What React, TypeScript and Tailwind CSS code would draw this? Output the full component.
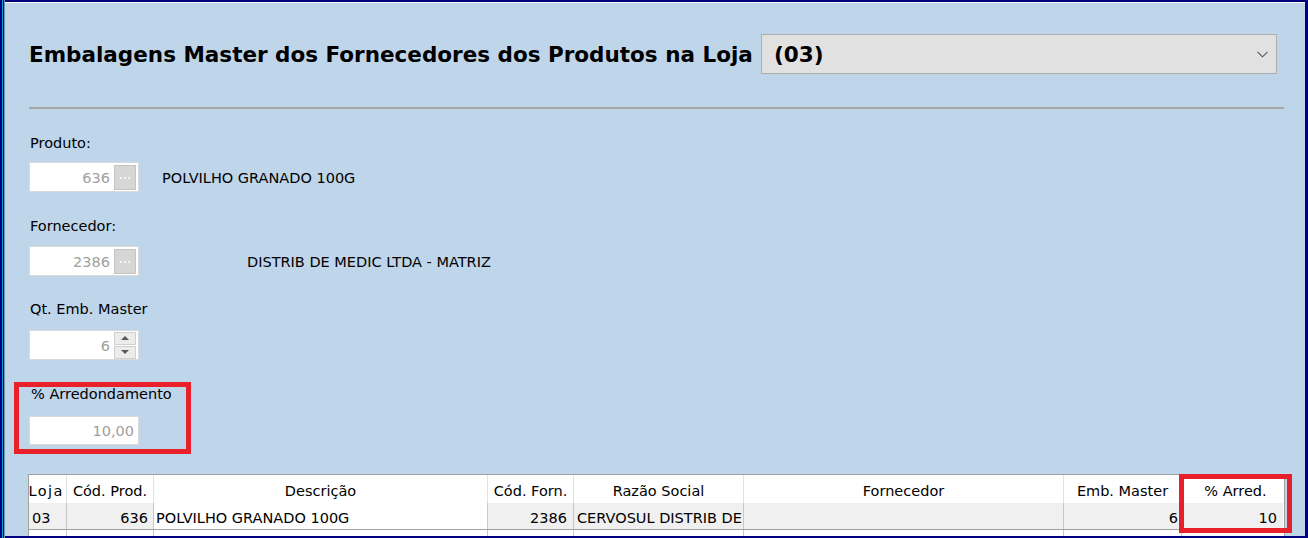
import React from "react";

function EllipsisButton() {
  return (
    <div className="w-[22px] h-[25px] bg-[#d6d6d6] border border-[#c4c4c4] flex items-center justify-center">
      <div className="flex gap-[2px] mt-[2px]">
        <div className="w-[2px] h-[2px] bg-[#f4f4f4]" />
        <div className="w-[2px] h-[2px] bg-[#f4f4f4]" />
        <div className="w-[2px] h-[2px] bg-[#f4f4f4]" />
      </div>
    </div>
  );
}

function LookupInput({ value }: { value: string }) {
  return (
    <div className="w-[110px] h-[30px] bg-white border border-[#dadada] flex items-center justify-end pr-[2px]">
      <span className="text-[#a0a0a0] mr-[4px] pt-[1px]">{value}</span>
      <EllipsisButton />
    </div>
  );
}

function SpinInput({ value }: { value: string }) {
  return (
    <div className="w-[110px] h-[30px] bg-white border border-[#dadada] flex items-center justify-end pr-[2px]">
      <span className="text-[#a0a0a0] mr-[4px] pt-[1px]">{value}</span>
      <div className="flex flex-col gap-[1px]">
        <div className="w-[22px] h-[13px] bg-[#ececec] border border-[#d0d0d0] flex items-center justify-center">
          <svg width="8" height="4" viewBox="0 0 8 4">
            <path d="M0 4 L4 0 L8 4 Z" fill="#5a5a5a" />
          </svg>
        </div>
        <div className="w-[22px] h-[13px] bg-[#ececec] border border-[#d0d0d0] flex items-center justify-center">
          <svg width="8" height="4" viewBox="0 0 8 4">
            <path d="M0 0 L8 0 L4 4 Z" fill="#5a5a5a" />
          </svg>
        </div>
      </div>
    </div>
  );
}

export default function App() {
  return (
    <div className="w-[1308px] h-[538px] flex bg-[#000080] overflow-hidden font-['DejaVu_Sans',sans-serif] text-[14.5px] leading-[18px] text-black">
      <div className="w-[2px] h-full bg-[#000080]" />
      <div className="w-[1px] h-full bg-[#00a0d8]" />
      <div className="w-[1px] h-full bg-[#000080]" />
      <div className="w-[1px] h-full bg-[#8090a8]" />
      <div className="flex-1 mt-[2px] mb-[2px] mr-[3px] bg-[#bfd5ea] border-t border-white flex flex-col pl-[24px] overflow-hidden">
        {/* Title row */}
        <div className="mt-[31px] h-[40px] flex items-center">
          <div className="w-[732px] font-bold text-[21.5px] leading-[26px] whitespace-nowrap pt-[1px]">
            Embalagens Master dos Fornecedores dos Produtos na Loja
          </div>
          <div className="w-[516px] h-[40px] bg-[#e1e1e1] border border-[#adadad] flex items-center justify-between pl-[12px] pr-[8px]">
            <span className="font-bold text-[21.5px] leading-[26px] pt-[1px]">(03)</span>
            <svg width="11" height="7" viewBox="0 0 11 7">
              <path d="M0.5 0.8 L5.5 5.8 L10.5 0.8" stroke="#555" strokeWidth="1.1" fill="none" />
            </svg>
          </div>
        </div>

        {/* Separator */}
        <div className="mt-[33px] w-[1255px] h-[3px] border-t-2 border-[#a6a6a6] bg-white" />

        {/* Produto */}
        <div className="mt-[23px] h-[18px] pl-[1px] pt-[2px] box-content">Produto:</div>
        <div className="mt-[10px] h-[30px] flex items-center">
          <LookupInput value="636" />
          <span className="ml-[23px] pt-[1px]">POLVILHO GRANADO 100G</span>
        </div>

        {/* Fornecedor */}
        <div className="mt-[23px] h-[18px] pl-[1px] pt-[2px] box-content">Fornecedor:</div>
        <div className="mt-[11px] h-[30px] flex items-center">
          <LookupInput value="2386" />
          <span className="ml-[108px] pt-[1px]">DISTRIB DE MEDIC LTDA - MATRIZ</span>
        </div>

        {/* Qt. Emb. Master */}
        <div className="mt-[22px] h-[18px] pl-[1px] pt-[2px] box-content">Qt. Emb. Master</div>
        <div className="mt-[12px] h-[30px] flex items-center">
          <SpinInput value="6" />
        </div>

        {/* % Arredondamento */}
        <div className="relative mt-[23px] w-[110px]">
          <div className="h-[18px] pl-[2px] pt-[2px] box-content whitespace-nowrap">% Arredondamento</div>
          <div className="mt-[13px] w-[110px] h-[29px] bg-white border border-[#dadada] flex items-center justify-end pr-[4px]">
            <span className="text-[#a0a0a0] pt-[1px]">10,00</span>
          </div>
          <div className="absolute left-[-15px] top-[-1px] w-[177px] h-[72px] border-[5px] border-[#e8202a]" />
        </div>

        {/* Grid */}
        <div className="relative mt-[29px] -ml-[1px] w-[1257px] border-l border-t border-r border-[#a0a0a0] bg-white">
          <div className="flex h-[28px] bg-white pt-[3px]">
            <div className="w-[38px] border-r border-[#e2e2e2] -mt-[3px] pt-[3px] overflow-hidden flex items-center justify-end pr-[2px] whitespace-nowrap tracking-[1.5px]">Loja</div>
            <div className="w-[87px] border-r border-[#e2e2e2] -mt-[3px] pt-[3px] flex items-center justify-center whitespace-nowrap">Cód. Prod.</div>
            <div className="w-[334px] border-r border-[#e2e2e2] -mt-[3px] pt-[3px] flex items-center justify-center">Descrição</div>
            <div className="w-[86px] border-r border-[#e2e2e2] -mt-[3px] pt-[3px] flex items-center justify-center whitespace-nowrap">Cód. Forn.</div>
            <div className="w-[170px] border-r border-[#e2e2e2] -mt-[3px] pt-[3px] flex items-center justify-center">Razão Social</div>
            <div className="w-[320px] border-r border-[#e2e2e2] -mt-[3px] pt-[3px] flex items-center justify-center">Fornecedor</div>
            <div className="w-[118px] border-r border-[#e2e2e2] -mt-[3px] pt-[3px] flex items-center justify-center whitespace-nowrap">Emb. Master</div>
            <div className="w-[101px] -mt-[3px] pt-[3px] flex items-center justify-center pl-[6px] whitespace-nowrap">% Arred.</div>
          </div>
          <div className="flex h-[27px] border-b border-[#a0a0a0]">
            <div className="w-[38px] bg-[#f0f0f0] border-r border-[#c8c8c8] flex items-center pl-[3px] pt-[4px]">03</div>
            <div className="w-[87px] bg-[#f0f0f0] border-r border-[#c8c8c8] flex items-center justify-end pr-[5px] pt-[4px]">636</div>
            <div className="w-[334px] bg-white border-r border-[#c8c8c8] flex items-center pl-[2px] pt-[4px] whitespace-nowrap">POLVILHO GRANADO 100G</div>
            <div className="w-[86px] bg-[#f0f0f0] border-r border-[#c8c8c8] flex items-center justify-end pr-[6px] pt-[4px]">2386</div>
            <div className="w-[170px] bg-[#f0f0f0] border-r border-[#c8c8c8] flex items-center pl-[3px] pt-[4px] overflow-hidden whitespace-nowrap">CERVOSUL DISTRIB DE MEDIC</div>
            <div className="w-[320px] bg-[#f0f0f0] border-r border-[#c8c8c8]" />
            <div className="w-[118px] bg-[#f0f0f0] border-r border-[#c8c8c8] flex items-center justify-end pr-[3px] pt-[4px]">6</div>
            <div className="w-[101px] bg-[#f0f0f0] flex items-center justify-end pr-[6px] pt-[4px]">10</div>
          </div>
          <div className="flex h-[26px] bg-white">
            <div className="w-[38px] border-r border-[#c8c8c8]" />
            <div className="w-[87px] border-r border-[#c8c8c8]" />
            <div className="w-[334px] border-r border-[#c8c8c8]" />
            <div className="w-[86px] border-r border-[#c8c8c8]" />
            <div className="w-[170px] border-r border-[#c8c8c8]" />
            <div className="w-[320px] border-r border-[#c8c8c8]" />
            <div className="w-[118px] border-r border-[#c8c8c8]" />
            <div className="w-[101px]" />
          </div>
          <div className="absolute left-[1150px] top-[-1px] w-[113px] h-[59px] border-[5px] border-[#e8202a]" />
        </div>
      </div>
    </div>
  );
}
